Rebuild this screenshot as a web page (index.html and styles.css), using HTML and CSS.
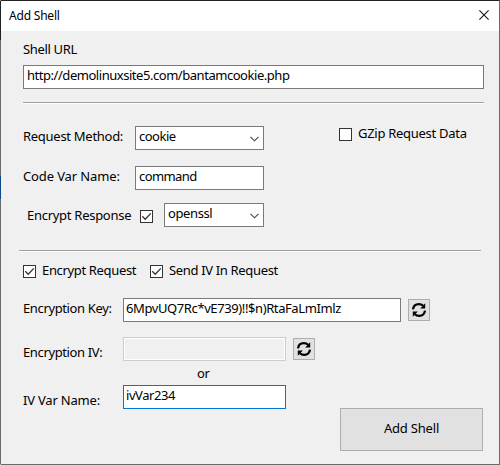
FILE: index.html
```html
<!DOCTYPE html>
<html lang="en">
<head>
<meta charset="utf-8">
<title>Add Shell</title>
<link rel="stylesheet" href="styles.css">
</head>
<body>
<svg class="defs" width="0" height="0">
  <symbol id="check" viewBox="0 0 11 11"><path d="M1.3 5.3 4.2 8.2 9.8 2.4" fill="none" stroke="#333" stroke-width="1.3"/></symbol>
  <symbol id="chevron" viewBox="0 0 9 6"><path d="M.5.8 4.5 4.8 8.5.8" fill="none" stroke="#444" stroke-width="1.1"/></symbol>
  <symbol id="refresh" viewBox="0 0 16 16"><g fill="none" stroke="#000" stroke-width="2.2"><path d="M2 7.4C2.4 4.2 4.7 2.2 7.8 2.2c2 0 3.2.5 4.3 1.6"/><path d="M14 8.6c-.4 3.2-2.7 5.2-5.8 5.2-2 0-3.2-.5-4.3-1.6"/></g><path d="M14.2 1.2v5.4H9.2zM1.8 14.8V9.4H6.8z"/></symbol>
</svg>
<main class="window">
  <header class="titlebar">
    <span class="title">Add Shell</span>
    <svg class="close" viewBox="0 0 10 10"><path d="M.4.4 9.6 9.6M9.6.4.4 9.6" stroke="#111" stroke-width="1.1"/></svg>
  </header>
  <div class="content">
    <div class="label url-label">Shell URL</div>
    <div class="field url">http://demolinuxsite5.com/bantamcookie.php</div>
    <div class="rule"></div>
    <div class="row method">
      <span class="label method-label">Request Method:</span>
      <div class="field select">cookie<svg class="chevron"><use href="#chevron"/></svg></div>
      <span class="box gzip"></span>
      <span class="label gzip-label">GZip Request Data</span>
    </div>
    <div class="row code">
      <span class="label method-label code-label">Code Var Name:</span>
      <div class="field code-name">command</div>
    </div>
    <div class="row response">
      <span class="label response-label">Encrypt Response</span>
      <span class="box response-box"><svg><use href="#check"/></svg></span>
      <div class="field select cipher">openssl<svg class="chevron"><use href="#chevron"/></svg></div>
    </div>
    <div class="rule second"></div>
    <div class="row options">
      <span class="box"><svg><use href="#check"/></svg></span>
      <span class="label request-label">Encrypt Request</span>
      <span class="box"><svg><use href="#check"/></svg></span>
      <span class="label send-label">Send IV In Request</span>
    </div>
    <div class="row key">
      <span class="label key-label">Encryption Key:</span>
      <div class="field key-value">6MpvUQ7Rc*vE739)!!$n)RtaFaLmImlz</div>
      <div class="refresh"><svg><use href="#refresh"/></svg></div>
    </div>
    <div class="row iv">
      <span class="label key-label">Encryption IV:</span>
      <div class="field iv-value"></div>
      <div class="refresh"><svg><use href="#refresh"/></svg></div>
    </div>
    <div class="label or">or</div>
    <div class="row ivname">
      <span class="label key-label">IV Var Name:</span>
      <div class="field iv-name">ivVar234</div>
    </div>
    <div class="submit">Add Shell</div>
  </div>
</main>
</body>
</html>
```
FILE: styles.css
```css
* { box-sizing: border-box; }
body { margin: 0; font: 13px/18px "Noto Sans", sans-serif; color: #000; }
.defs { position: absolute; }
.window {
  width: 500px; height: 465px;
  border: 1px solid #6b6b6b; border-top-color: #222; border-left-color: transparent;
  background:
    linear-gradient(#f0f0f0, #f0f0f0) padding-box,
    linear-gradient(#222 40px, #6b6b6b 40px 176px, #0b4a85 176px 199px, #6b6b6b 199px) border-box;
}
.titlebar {
  height: 30px; background: #fff; padding: 0 10px 0 8px;
  display: flex; align-items: center; justify-content: space-between;
}
.title { font-size: 12px; letter-spacing: -.2px; }
.close { width: 10px; height: 10px; margin-top: -2px; }
.content { padding: 9px 15px 0 22px; display: flex; flex-direction: column; }
.label { white-space: nowrap; letter-spacing: -.28px; }
.url-label { height: 18px; letter-spacing: -.33px; }
.field {
  height: 24px; flex: none; background: #fff; border: 1px solid #7a7a7a;
  padding: 0 3px; white-space: nowrap; letter-spacing: -.5px;
}
.url { width: 461px; margin-top: 7px; letter-spacing: -.46px; }
.rule { width: 461px; height: 2px; margin-top: 13px; background: #a0a0a0; border-bottom: 1px solid #fff; }
.row { display: flex; align-items: flex-start; }
.row .label { flex: none; }
.method { margin-top: 22px; height: 24px; }
.method-label { width: 112px; padding-top: 1px; }
.code-label { letter-spacing: -.12px; }
.select { width: 129px; display: flex; justify-content: space-between; }
.chevron { width: 9px; height: 6px; margin: 9px 1px 0 0; }
.box { flex: none; width: 13px; height: 13px; background: #fff; border: 1px solid #333; }
.box svg { display: block; width: 11px; height: 11px; }
.gzip { margin: 2px 6px 0 75px; }
.gzip-label { margin-top: -2px; }
.code { margin-top: 16px; height: 24px; }
.code-name { width: 129px; letter-spacing: -.6px; }
.response { margin-top: 13px; height: 24px; }
.response-label { width: 117px; padding: 3px 0 0 4px; }
.response-box { margin: 7px 11px 0 0; }
.cipher { width: 100px; letter-spacing: -.4px; }
.second { width: 462px; margin: 23px 0 0 -4px; }
.options { margin-top: 13px; height: 13px; }
.options .label { margin: -4px 0 0 6px; letter-spacing: -.34px; }
.request-label { width: 108px; }
.key { margin-top: 20px; height: 24px; }
.key-label { width: 100px; padding-top: 1px; letter-spacing: -.37px; }
.key-value { width: 278px; padding-left: 2px; letter-spacing: -.4px; }
.refresh {
  width: 22px; height: 22px; margin: 1px 0 0 7px; background: #e1e1e1;
  border: 1px solid #adadad; padding: 2px;
}
.refresh svg { display: block; width: 16px; height: 16px; }
.iv { margin-top: 15px; height: 24px; }
.iv .label { padding-top: 6px; }
.iv-value { width: 163px; background: #f0f0f0; border-color: #ccc; box-shadow: inset 0 0 0 1px #fff; }
.or { height: 18px; margin: 3px 0 0 174px; }
.ivname { margin-top: 3px; height: 24px; }
.ivname .label { padding-top: 6px; letter-spacing: -.2px; }
.iv-name { width: 163px; border-color: #0078d7; padding-left: 2px; letter-spacing: -.45px; }
.submit {
  width: 143px; height: 43px; margin: -1px 0 0 317px; background: #e1e1e1;
  border: 1px solid #adadad; text-align: center; line-height: 39px; letter-spacing: -.2px;
}
```
